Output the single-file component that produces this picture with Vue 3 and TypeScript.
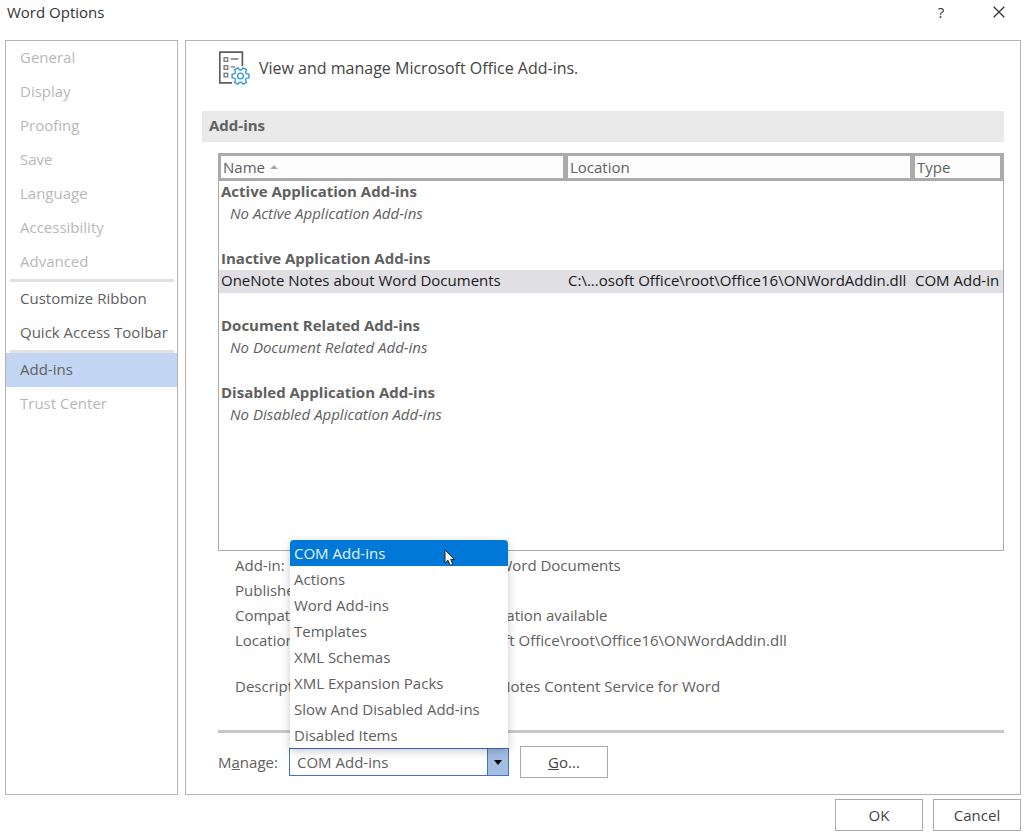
<script setup lang="ts">
import { ref } from 'vue'

interface NavItem {
  label: string
  enabled: boolean
  separated?: boolean
}

interface AddInRow {
  name: string
  location: string
  type: string
}

interface AddInGroup {
  title: string
  empty: string
  rows: AddInRow[]
}

const navItems: NavItem[] = [
  { label: 'General', enabled: false },
  { label: 'Display', enabled: false },
  { label: 'Proofing', enabled: false },
  { label: 'Save', enabled: false },
  { label: 'Language', enabled: false },
  { label: 'Accessibility', enabled: false },
  { label: 'Advanced', enabled: false },
  { label: 'Customize Ribbon', enabled: true, separated: true },
  { label: 'Quick Access Toolbar', enabled: true },
  { label: 'Add-ins', enabled: true, separated: true },
  { label: 'Trust Center', enabled: false },
]
const activePage = ref('Add-ins')

const groups: AddInGroup[] = [
  { title: 'Active Application Add-ins', empty: 'No Active Application Add-ins', rows: [] },
  {
    title: 'Inactive Application Add-ins',
    empty: '',
    rows: [
      {
        name: 'OneNote Notes about Word Documents',
        location: 'C:\\...osoft Office\\root\\Office16\\ONWordAddin.dll',
        type: 'COM Add-in',
      },
    ],
  },
  { title: 'Document Related Add-ins', empty: 'No Document Related Add-ins', rows: [] },
  { title: 'Disabled Application Add-ins', empty: 'No Disabled Application Add-ins', rows: [] },
]

const details = [
  { term: 'Add-in:', value: 'OneNote Notes about Word Documents' },
  { term: 'Publisher:', value: 'Microsoft Corporation' },
  { term: 'Compatibility:', value: 'No compatibility information available' },
  { term: 'Location:', value: 'C:\\...gram Files\\Microsoft Office\\root\\Office16\\ONWordAddin.dll' },
  { term: 'Description:', value: 'Provides the OneNote Notes Content Service for Word' },
]

const manageOptions = [
  'COM Add-ins',
  'Actions',
  'Word Add-ins',
  'Templates',
  'XML Schemas',
  'XML Expansion Packs',
  'Slow And Disabled Add-ins',
  'Disabled Items',
]
const managed = ref('COM Add-ins')
const highlighted = ref('COM Add-ins')
const listOpen = ref(true)

function choose(option: string) {
  managed.value = option
  highlighted.value = option
  listOpen.value = false
}
</script>

<template>
  <div class="dialog">
    <header class="titlebar">
      <h1>Word Options</h1>
      <button class="caption" type="button" aria-label="Help">?</button>
      <button class="caption" type="button" aria-label="Close">
        <svg width="12" height="12" viewBox="0 0 12 12" fill="none" stroke="#333" stroke-width="1.3">
          <path d="M0.7 0.7 11.3 11.3M11.3 0.7 0.7 11.3" />
        </svg>
      </button>
    </header>

    <div class="body">
      <nav class="sidebar" aria-label="Option pages">
        <template v-for="item in navItems" :key="item.label">
          <div v-if="item.separated" class="separator"></div>
          <button
            type="button"
            class="nav-item"
            :class="{ active: item.label === activePage }"
            :disabled="!item.enabled"
            @click="activePage = item.label"
          >
            {{ item.label }}
          </button>
        </template>
      </nav>

      <main class="page">
        <div class="intro">
          <svg width="32" height="34" viewBox="0 0 32 34" fill="none">
            <path d="M14 31.8H1.8V1.2H24.4V15" stroke="#5e5e5e" stroke-width="1.7" />
            <g stroke="#777" stroke-width="1.3">
              <rect x="6.1" y="6.7" width="3.6" height="3.6" />
              <rect x="6.1" y="14.7" width="3.6" height="3.6" />
              <rect x="6.1" y="22.3" width="3.6" height="3.6" />
              <path d="M12.6 8H20.4M12.6 15.9H17" />
            </g>
            <g transform="translate(22.5 25)" stroke="#2f97dc" stroke-width="1.4" stroke-linejoin="round">
              <path
                d="M8.4 -1.9V1.9Q5.6 1.9 5.2 3Q4.8 4 5.9 6.3L2.5 8.2Q1.2 6 0 6Q-1.2 6 -2.5 8.2L-5.9 6.3Q-4.8 4 -5.2 3Q-5.6 1.9 -8.4 1.9V-1.9Q-5.6 -1.9 -5.2 -3Q-4.8 -4 -5.9 -6.3L-2.5 -8.2Q-1.2 -6 0 -6Q1.2 -6 2.5 -8.2L5.9 -6.3Q4.8 -4 5.2 -3Q5.6 -1.9 8.4 -1.9Z"
                fill="#fff"
              />
              <circle r="2.9" />
            </g>
          </svg>
          <p>View and manage Microsoft Office Add-ins.</p>
        </div>

        <h2 class="section">Add-ins</h2>

        <div class="content">
          <div class="list">
            <table>
              <colgroup>
                <col class="wide" />
                <col class="wide" />
                <col />
              </colgroup>
              <thead>
                <tr>
                  <th scope="col">
                    Name
                    <svg width="8" height="4" viewBox="0 0 8 4"><path d="M0 4 4 0 8 4Z" fill="#a8a89c" /></svg>
                  </th>
                  <th scope="col">Location</th>
                  <th scope="col">Type</th>
                </tr>
              </thead>
              <tbody v-for="group in groups" :key="group.title">
                <tr class="group-title">
                  <td colspan="3">{{ group.title }}</td>
                </tr>
                <tr v-for="row in group.rows" :key="row.name" class="selected">
                  <td>{{ row.name }}</td>
                  <td>{{ row.location }}</td>
                  <td>{{ row.type }}</td>
                </tr>
                <tr v-if="!group.rows.length" class="empty">
                  <td colspan="3">{{ group.empty }}</td>
                </tr>
                <tr class="spacer">
                  <td colspan="3"></td>
                </tr>
              </tbody>
            </table>
          </div>

          <dl class="details">
            <div v-for="detail in details" :key="detail.term">
              <dt>{{ detail.term }}</dt>
              <dd>{{ detail.value }}</dd>
            </div>
          </dl>

          <div class="manage">
            <label for="manage">M<u>a</u>nage:</label>
            <div class="combo">
              <select id="manage" v-model="managed">
                <option v-for="option in manageOptions" :key="option">{{ option }}</option>
              </select>
              <span class="arrow">
                <svg width="8" height="5" viewBox="0 0 8 5"><path d="M0 0H8L4 5Z" fill="#000" /></svg>
              </span>
              <ul v-if="listOpen" class="popup" role="listbox" aria-label="Manage">
                <li
                  v-for="option in manageOptions"
                  :key="option"
                  role="option"
                  :aria-selected="option === managed"
                  :class="{ highlighted: option === highlighted }"
                  @mouseenter="highlighted = option"
                  @click="choose(option)"
                >
                  {{ option }}
                </li>
              </ul>
              <svg v-if="listOpen" class="pointer" width="12" height="18" viewBox="0 0 12 18">
                <path
                  d="M1 1V14L4 11.3L6.2 16.4L8.8 15.3L6.7 10.4H10.6Z"
                  fill="#fff"
                  stroke="#222"
                  stroke-width="1"
                />
              </svg>
            </div>
            <button class="push" type="button"><span><u>G</u>o...</span></button>
          </div>
        </div>
      </main>
    </div>

    <footer class="footer">
      <button class="push" type="button">OK</button>
      <button class="push" type="button">Cancel</button>
    </footer>
  </div>
</template>

<style>
body {
  margin: 0;
  background: #fff;
}
</style>

<style scoped>
.dialog {
  box-sizing: border-box;
  min-height: 100vh;
  display: flex;
  flex-direction: column;
  padding: 0 3px 4px 5px;
  font-family: 'Open Sans', 'Noto Sans', sans-serif;
  font-size: 15px;
  line-height: 22px;
  color: #606060;
}

button,
select {
  font: inherit;
  color: inherit;
}

h1,
h2,
p,
dl,
dd,
ul {
  margin: 0;
  padding: 0;
}

.titlebar {
  display: flex;
  align-items: center;
  height: 24px;
  padding: 0 0 16px 2px;
  color: #333;
}

.titlebar h1 {
  flex: 1;
  font-size: 15px;
  font-weight: 400;
}

.caption {
  display: flex;
  align-items: center;
  justify-content: center;
  width: 58px;
  height: 24px;
  padding: 0;
  border: 0;
  background: none;
}

.caption:last-child {
  width: 44px;
  margin-left: 7px;
}

.body {
  flex: 1;
  display: flex;
  gap: 7px;
}

.sidebar {
  box-sizing: border-box;
  flex: 0 0 173px;
  border: 1px solid #b4b4b4;
}

.nav-item {
  display: block;
  width: 100%;
  height: 34px;
  padding: 0 0 2px 14px;
  border: 0;
  background: none;
  text-align: left;
  white-space: nowrap;
}

.nav-item:disabled {
  color: #b8b8b8;
}

.nav-item.active {
  background: #c2d5f2;
}

.separator {
  height: 3px;
  margin: 0 3px 0 4px;
  background: #e1e1e1;
}

.page {
  box-sizing: border-box;
  flex: 1;
  min-width: 0;
  display: flex;
  flex-direction: column;
  padding: 10px 16px 16px;
  border: 1px solid #b4b4b4;
}

.intro {
  display: flex;
  align-items: center;
  gap: 9px;
  height: 34px;
  padding-left: 16px;
  color: #444;
  font-size: 16px;
}

.section {
  margin-top: 26px;
  padding: 3px 7px 6px;
  background: #e9e9e9;
  font-size: 15px;
  font-weight: 700;
}

.content {
  flex: 1;
  display: flex;
  flex-direction: column;
  margin: 11px 0 0 16px;
}

.list {
  flex: 1;
  border: 1px solid #ababab;
  overflow: hidden;
}

table {
  width: 100%;
  table-layout: fixed;
  border-collapse: separate;
  border-spacing: 0;
}

.wide {
  width: 347px;
}

th {
  height: 22px;
  padding: 0 2px;
  border: solid #ababab;
  border-width: 2px 3px 3px 2px;
  background: #fdfdfd;
  font-weight: 400;
  text-align: left;
}

th svg {
  margin: 0 0 4px 1px;
}

td {
  height: 22px;
  padding: 0 2px;
  overflow: hidden;
  line-height: 20px;
  vertical-align: top;
  white-space: nowrap;
}

.group-title td {
  font-weight: 700;
}

.selected td,
.empty td {
  height: 23px;
}

.selected td {
  background: #e0dfe4;
  color: #1a1a1a;
}

.empty td {
  padding-left: 11px;
  font-style: italic;
}

.details {
  display: flex;
  flex-direction: column;
  padding: 2px 0 31px 17px;
}

.details div {
  display: flex;
  line-height: 25px;
  white-space: nowrap;
}

.details div:last-child {
  margin-top: 21px;
}

.details dt {
  width: 106px;
}

.manage {
  display: flex;
  align-items: center;
  padding-top: 13px;
  border-top: 3px solid #c8c8c8;
}

.manage label {
  width: 71px;
}

.combo {
  position: relative;
  box-sizing: border-box;
  display: flex;
  width: 220px;
  height: 28px;
  margin-right: 11px;
  border: 1px solid #4472c4;
}

.combo select {
  appearance: none;
  flex: 1;
  min-width: 0;
  padding: 0 0 0 7px;
  border: 0;
  outline: 0;
  background: #fff;
}

.arrow {
  display: flex;
  align-items: center;
  justify-content: center;
  width: 20px;
  border-left: 1px solid #4472c4;
  background: #a3bde3;
  pointer-events: none;
}

.popup {
  position: absolute;
  bottom: 27px;
  left: 0;
  right: 0;
  border-radius: 4px;
  overflow: hidden;
  background: #fff;
  box-shadow: 0 3px 10px rgba(0, 0, 0, 0.22);
  list-style: none;
}

.popup li {
  padding-left: 4px;
  line-height: 26px;
}

.popup .highlighted {
  background: #0078d7;
  color: #e8f2fb;
}

.pointer {
  position: absolute;
  left: 154px;
  bottom: 208px;
}

.push {
  box-sizing: border-box;
  width: 88px;
  height: 32px;
  padding: 0;
  border: 1px solid #ababab;
  background: #fff;
  color: #444;
}

.footer {
  display: flex;
  justify-content: flex-end;
  gap: 10px;
  padding-top: 4px;
}
</style>
